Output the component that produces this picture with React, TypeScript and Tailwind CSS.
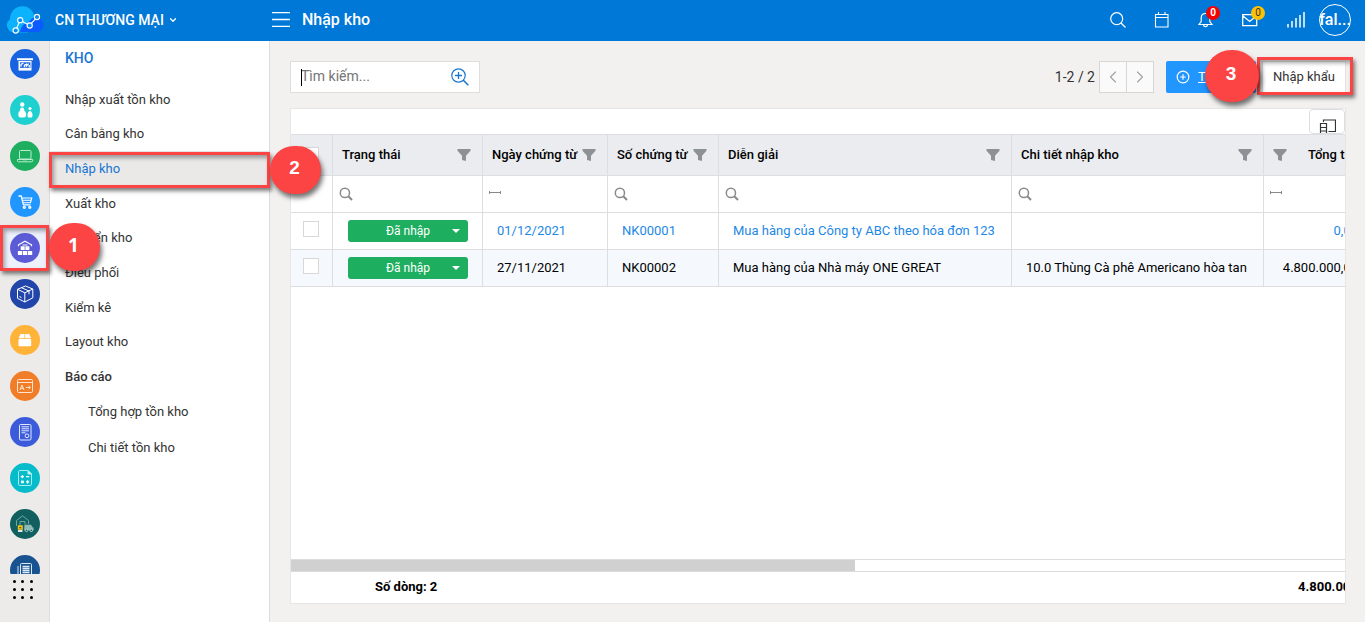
import React from "react";
import { ChevronDown, ChevronLeft, ChevronRight, CirclePlus } from "lucide-react";

type RailItem = { label: string; color: string; icon: React.ReactNode; active?: boolean };

const RAIL: RailItem[] = [
  {
    label: "Tổng quan",
    color: "bg-[#1763e0]",
    icon: (
      <>
        <path d="M7 9.2h16v2H7z" fill="#fff" />
        <path d="M8.5 12h13v9.6h-13z" fill="#fff" />
        <path d="M10 13.3h10.4v5.6H10z" fill="#1763e0" />
        <path d="M11 17.8v-2.400l2.400-1.200M14.400 18.200v-2l2-1v1.800l2.200-2.400M19.200 16v2.400" fill="none" stroke="#fff" strokeWidth="1.300" />
      </>
    ),
  },
  {
    label: "Khách hàng",
    color: "bg-[#1fd0d0]",
    icon: (
      <g fill="#fff">
        <circle cx="12.2" cy="9.5" r="2.2" />
        <path d="M12.2 12.4c1.7 0 2 1.200 2.100 3 1.400 1.100 2 2.600 1.800 4.600-.2 1.700-.8 2.500-2.400 2.500h-3c-1.600 0-2.200-.8-2.400-2.500-.2-2 .4-3.500 1.800-4.600.1-1.800.4-3 2.100-3z" />
        <circle cx="20" cy="13.6" r="1.6" />
        <path d="M20 15.9c1.200 0 2.400 1.600 2.500 4 .1 1.700-.5 2.600-1.500 2.600h-2c-1 0-1.600-.9-1.500-2.600.1-2.400 1.300-4 2.500-4z" />
      </g>
    ),
  },
  {
    label: "Bán hàng",
    color: "bg-[#1dae60]",
    icon: (
      <g fill="none" stroke="#b9ecce" strokeWidth="1">
        <rect x="9.500" y="9.500" width="11.500" height="8.500" rx="1" />
        <path d="M7.500 18.500h15.200v1.300c0 .6-.5 1-1 1H8.500c-.6 0-1-.4-1-1zM13 18.800h4" />
      </g>
    ),
  },
  {
    label: "Mua hàng",
    color: "bg-[#2196ff]",
    icon: (
      <g fill="none" stroke="#fff" strokeWidth="1.300">
        <path d="M8.500 9h2.700l2.300 8.800h7" />
        <path d="M12 11h9.800l-1.300 4.800h-7.200M12.500 13.300h8.500" strokeWidth="1.100" />
        <circle cx="14.300" cy="20.300" r="1" />
        <circle cx="19.800" cy="20.300" r="1" />
      </g>
    ),
  },
  {
    label: "Kho",
    color: "bg-[#5b5bd6]",
    active: true,
    icon: (
      <>
        <path d="M8.500 13.200v-1.400L15 8.300l6.500 3.500v1.400" fill="none" stroke="#fff" strokeWidth="1.200" />
        <g fill="#fff">
          <path d="M10.700 13.200h4v3.700h-4zM15.400 13.200h4v3.700h-4zM7.900 18h4.300v3.900H7.900zM12.900 18h4.300v3.900h-4.300zM17.900 18h4.300v3.900h-4.300z" />
          <path d="M12.500 11.500h5v1h-5z" />
        </g>
      </>
    ),
  },
  {
    label: "Sản phẩm",
    color: "bg-[#2145a8]",
    icon: (
      <g fill="none" stroke="#fff" strokeWidth="1" strokeLinejoin="round">
        <path d="M15.500 7l7.300 3v8.800L14.800 23 7.500 19.300V10.300z" />
        <path d="M7.500 10.300l7.300 3.500 8-3.800M14.800 13.800V23M11.500 8.700l7.500 3.300v3.300M9.500 17.500l2 1" />
      </g>
    ),
  },
  {
    label: "Giao hàng",
    color: "bg-[#ffb338]",
    icon: (
      <g fill="#fff">
        <path d="M10.500 9h4v4.300H8.600zM15.200 9h4l1.900 4.300h-5.900z" />
        <rect x="8.500" y="14" width="12.700" height="7.200" rx=".8" />
      </g>
    ),
  },
  {
    label: "Ngôn ngữ",
    color: "bg-[#f07d27]",
    icon: (
      <g fill="none" stroke="#ffe3cd" strokeWidth="1">
        <rect x="7.500" y="8.500" width="15" height="13" rx="1.200" />
        <path d="M7.500 11.500h15M10 19l2-5 2 5M10.800 17.300h2.600M16 16.500h4.300M18.700 14.900l1.700 1.600-1.700 1.600" />
      </g>
    ),
  },
  {
    label: "Hợp đồng",
    color: "bg-[#3b5bdb]",
    icon: (
      <g fill="none" stroke="#e3e9ff" strokeWidth="1">
        <rect x="9.500" y="7.500" width="11.500" height="15.500" rx="1.200" />
        <path d="M11.500 9.800h7.500M11.500 11.800h7.500M11.500 13.800h7.500M11.500 15.800h4" />
        <circle cx="17" cy="18.800" r="1.900" />
      </g>
    ),
  },
  {
    label: "Kế toán",
    color: "bg-[#06bccb]",
    icon: (
      <g fill="none" stroke="#a5eef2" strokeWidth="1">
        <path d="M18 7.500H9.700c-.7 0-1.200.5-1.200 1.200v12.600c0 .7.5 1.200 1.200 1.200h10.600c.7 0 1.200-.5 1.200-1.200V11z" />
        <path d="M18 7.500V11h3.500z" fill="#fff" />
        <path d="M10.800 13.700h3.200M12.400 12.100v3.200M16 13.700h3.200M11.300 17.700l2.300 2.300M13.600 17.700l-2.300 2.300M16 18.800h3.200M17.600 17.200v3.200" stroke="#fff" strokeWidth="1.300" />
      </g>
    ),
  },
  {
    label: "Tài sản",
    color: "bg-[#11605f]",
    icon: (
      <>
        <path d="M6.500 17v-5.500l6-4.700 6 4.700v3.500M10 16v-3.500h5v3" fill="none" stroke="#6fa5a2" strokeWidth="1" />
        <path d="M14.500 15.800h6.500l1.800 2.700h.8v2.800h-9.500z" fill="#8db9b6" />
        <circle cx="16.500" cy="21.300" r="1.300" fill="#11605f" stroke="#b9d6d4" />
        <circle cx="21.300" cy="21.300" r="1.300" fill="#11605f" stroke="#b9d6d4" />
        <rect x="7.800" y="16.300" width="5" height="4.500" rx=".6" fill="#f5c518" />
        <path d="M9.300 18h2v1.300h-2z" fill="#6b4e00" />
        <path d="M8 21h4.500v2H8z" fill="#d8e8e6" />
      </>
    ),
  },
  {
    label: "Tin tức",
    color: "bg-[#18528f]",
    icon: (
      <g fill="none" stroke="#dbe8f7" strokeWidth="1">
        <path d="M10.500 22V9.500c0-.6.4-1 1-1h9c.6 0 1 .4 1 1V22M8 11v11" />
        <path d="M12.500 11.500h7M12.500 13.500h7M12.500 15.500h7M12.500 17.500h7" strokeWidth="1.300" />
      </g>
    ),
  },
];

const MENU = ["Nhập xuất tồn kho", "Cân bằng kho", "Nhập kho", "Xuất kho", "Chuyển kho", "Điều phối", "Kiểm kê", "Layout kho"];
const REPORTS = ["Tổng hợp tồn kho", "Chi tiết tồn kho"];

const ROWS = [
  { date: "01/12/2021", code: "NK00001", note: "Mua hàng của Công ty ABC theo hóa đơn 123", detail: "", total: "0,00", link: true },
  { date: "27/11/2021", code: "NK00002", note: "Mua hàng của Nhà máy ONE GREAT", detail: "10.0 Thùng Cà phê Americano hòa tan", total: "4.800.000,00", link: false },
];

const COLUMNS = ["Trạng thái", "Ngày chứng từ", "Số chứng từ", "Diễn giải", "Chi tiết nhập kho"];
const FILTERS = [
  { name: "Trạng thái", range: false },
  { name: "Ngày chứng từ", range: true },
  { name: "Số chứng từ", range: false },
  { name: "Diễn giải", range: false },
  { name: "Chi tiết nhập kho", range: false },
  { name: "Tổng tiền", range: true },
];

function Logo() {
  return (
    <svg className="h-[30px] w-[38px]" viewBox="6 5 38 30" aria-hidden="true">
      <path d="M14 32.500a7.300 7.300 0 0 1-4-13.200C10 12 15 6.300 22.500 6.300c5.500 0 9.500 3 11.300 8.200 1.500 4 0 12-6 18z" fill="#0cb2fb" />
      <path d="M20 32c1-5.500 4-8.800 8.500-9.500 2-3.500 5-5.500 8.500-5 4 .8 6.500 3.800 6.500 7.500 0 4.300-3 7-7 7z" fill="#0b5cff" />
      <g stroke="#fff" strokeWidth="1.100">
        <path d="M16.600 28.200l2.600-5.700M22.300 21.500l5.200 2.800M31.300 23.300l4-4.200" />
        <g fill="#0a8cf0">
          <circle cx="15.700" cy="30.500" r="2.600" />
          <circle cx="20.200" cy="20.200" r="2.600" />
          <circle cx="29.700" cy="25.500" r="2.600" />
          <circle cx="37" cy="17" r="2.600" />
        </g>
      </g>
    </svg>
  );
}

function Funnel() {
  return (
    <svg className="h-3 w-[14px] shrink-0" viewBox="0 0 14 12" fill="#8d9095" aria-hidden="true">
      <path d="M.5 0h13v1.800L9 6.800V12L5 11V6.800L.5 1.800z" />
    </svg>
  );
}

function Lens() {
  return (
    <svg className="h-[14px] w-[14px] shrink-0" viewBox="0 0 14 14" fill="none" stroke="#8a8a8a" strokeWidth="1.500" aria-hidden="true">
      <circle cx="5.900" cy="5.900" r="4.600" />
      <path d="M9.300 9.300L13 13" strokeWidth="2" />
    </svg>
  );
}

function Range() {
  return (
    <svg className="h-[14px] w-[12px] shrink-0" viewBox="0 0 12 14" fill="none" stroke="#888" aria-hidden="true">
      <path d="M.5 4v3M11.500 4v3M1 5.500h10" />
    </svg>
  );
}

const BOX = "absolute border-3 border-[#fd4444] shadow-[2px_3px_4px_rgba(0,0,0,0.5),inset_2px_3px_4px_rgba(0,0,0,0.35)]";
const DOT = "absolute flex items-center justify-center rounded-full bg-[#fd4444] pb-[3px] text-[19px] font-bold text-white shadow-[2px_4px_5px_rgba(0,0,0,0.55)]";

function Callouts() {
  return (
    <div className="pointer-events-none absolute inset-0 z-10">
      <div className={`${BOX} left-0 top-[225px] h-[46px] w-[49px]`} />
      <div className={`${DOT} left-[49px] top-[223px] h-12 w-[51px] pr-[2px] font-['Open_Sans',sans-serif]`}>1</div>
      <div className={`${BOX} left-[49px] top-[152px] h-9 w-[221px]`} />
      <div className={`${DOT} left-[270px] top-[146px] h-12 w-[51px] pr-[2px] font-['Liberation_Sans',sans-serif]`}>2</div>
      <div className={`${BOX} right-3 top-[57px] h-[38px] w-24`} />
      <div className={`${DOT} right-[106px] top-[50px] h-[52px] w-[54px] pr-[2px] font-['Liberation_Sans',sans-serif]`}>3</div>
    </div>
  );
}

function Header() {
  return (
    <header className="flex h-[41px] shrink-0 items-center bg-[#0078d7] pb-[2px] text-white">
      <div className="flex w-[272px] items-center pl-[6px]">
        <Logo />
        <button type="button" className="ml-[11px] flex items-center gap-1 text-[14px] font-medium leading-5">
          CN THƯƠNG MẠI
          <ChevronDown size={10} strokeWidth={3} />
        </button>
      </div>
      <button type="button" aria-label="Mở menu">
        <svg className="h-[15px] w-[18px]" viewBox="0 0 18 15" stroke="#fff" strokeWidth="1.300" aria-hidden="true">
          <path d="M0 .7h18M0 7.500h18M0 14.300h18" />
        </svg>
      </button>
      <h1 className="ml-3 text-[16px] font-medium leading-5">Nhập kho</h1>
      <div className="ml-auto flex items-center gap-7 pr-[14px]">
        <button type="button" aria-label="Tìm kiếm">
          <svg className="h-4 w-4" viewBox="0 0 16 16" fill="none" stroke="#fff" strokeWidth="1.200">
            <circle cx="6.700" cy="6.700" r="6" />
            <path d="M11 11l4.500 4.500" />
          </svg>
        </button>
        <button type="button" aria-label="Lịch">
          <svg className="h-4 w-4" viewBox="0 0 16 16" fill="none" stroke="#fff" strokeWidth="1.100">
            <path d="M1.500 2.500h12.500v12.500h-12.500zM1.500 5.500h12.500M4.500 0v2.500M11 0v2.500" />
          </svg>
        </button>
        <button type="button" aria-label="Thông báo" className="relative">
          <svg className="h-4 w-4" viewBox="0 0 16 16" fill="none" stroke="#fff" strokeWidth="1.200">
            <path d="M7.500 1.500c-2.800 0-4.300 2-4.300 4.500v3.500L1 12.500h13L11.800 9.500V6c0-2.500-1.500-4.500-4.300-4.500zM5.500 12.500c0 2.800 4 2.800 4 0" />
          </svg>
          <span className="absolute -top-1.5 left-2 flex h-[14px] w-[14px] items-center justify-center rounded-full bg-[#f60000] text-[10px] font-bold leading-none">0</span>
        </button>
        <button type="button" aria-label="Tin nhắn" className="relative">
          <svg className="h-4 w-4" viewBox="0 0 16 16" fill="none" stroke="#fff" strokeWidth="1.300">
            <path d="M.7 2.700h14v11H.7zM1 4l6.700 5.500L14.400 4" />
          </svg>
          <span className="absolute -top-1.5 left-[9px] flex h-[14px] w-[14px] items-center justify-center rounded-full bg-[#ffc107] text-[10px] leading-none text-[#333]">0</span>
        </button>
        <div className="flex items-center gap-[14px] pl-px">
          <button type="button" aria-label="Tín hiệu">
            <svg className="h-4 w-[18px]" viewBox="0 0 18 16" fill="none" stroke="#fff" strokeWidth="1.500">
              <path d="M1 15.500v-3.500M5 15.500V9M9 15.500V6M13 15.500V3M17 15.500V0" />
            </svg>
          </button>
          <button type="button" className="flex h-8 w-8 items-center justify-center rounded-full border border-white text-[16px] font-medium leading-5">
            fal...
          </button>
        </div>
      </div>
    </header>
  );
}

function Rail() {
  return (
    <nav aria-label="Phân hệ" className="flex w-[50px] shrink-0 flex-col border-r border-[#dcdcdc] bg-[#ecebea]">
      <div className="mb-[6px] min-h-0 flex-1 overflow-hidden">
        {RAIL.map((item) => (
          <a key={item.label} href="#" aria-label={item.label} className={`flex h-[46px] items-center pl-[10px] ${item.active ? "bg-[#edf1fc]" : ""}`}>
            <span className={`block h-[30px] w-[30px] rounded-full ${item.color}`}>
              <svg viewBox="0 0 30 30" className="h-[30px] w-[30px]" aria-hidden="true">{item.icon}</svg>
            </span>
          </a>
        ))}
      </div>
      <button type="button" aria-label="Tất cả ứng dụng" className="mb-[23px] ml-[13px] grid w-5 grid-cols-3 gap-[5px]">
        {Array.from({ length: 9 }, (_, i) => (
          <span key={i} className="h-[3px] w-[3px] rounded-full bg-black" />
        ))}
      </button>
    </nav>
  );
}

function SideMenu() {
  return (
    <aside className="flex w-[220px] shrink-0 flex-col border-r border-[#dcdcdc] bg-white text-[13px] text-[#333]">
      <h2 className="mb-[6px] flex h-[35px] items-center pl-[15px] text-[14px] font-medium text-[#1976d2]">KHO</h2>
      <ul className="grid h-[312px] auto-rows-fr">
        {MENU.map((label) => (
          <li key={label}>
            <a href="#" className={`flex h-full items-center pl-[15px] ${label === "Nhập kho" ? "bg-[#eae9e8] text-[#1976d2]" : ""}`}>
              {label}
            </a>
          </li>
        ))}
        <li className="flex items-center pl-[15px] font-medium">Báo cáo</li>
      </ul>
      <ul>
        {REPORTS.map((label) => (
          <li key={label}>
            <a href="#" className="flex h-9 items-center pl-[38px]">{label}</a>
          </li>
        ))}
      </ul>
    </aside>
  );
}

function Toolbar() {
  return (
    <div className="flex h-8 shrink-0 items-center text-[#333]">
      <div className="relative flex h-8 w-[190px] items-center border border-[#dedede] bg-white pl-[10px] pr-[10px]">
        <input type="search" aria-label="Tìm kiếm" placeholder="Tìm kiếm..." className="w-full min-w-0 flex-1 bg-transparent pb-[2px] text-[14px] placeholder-[#757575] outline-none" />
        <span className="absolute left-[10px] top-[7px] h-[17px] w-px bg-black" />
        <button type="button" aria-label="Tìm kiếm nâng cao">
          <svg className="h-[18px] w-[18px]" viewBox="0 0 18 18" fill="none" stroke="#1976d2" strokeWidth="1.200">
            <circle cx="7.500" cy="7.500" r="6.700" />
            <path d="M7.500 4v7M4 7.500h7" strokeWidth="1.300" />
            <path d="M12.300 12.300l5 5" strokeWidth="1.600" />
          </svg>
        </button>
      </div>
      <span className="ml-auto text-[14px]">1-2 / 2</span>
      <div className="ml-1 flex h-8 border border-[#d6d6d6] bg-[#fafafa] text-[#a0a0a0]">
        <button type="button" aria-label="Trang trước" className="flex w-[27px] items-center justify-center border-r border-[#d6d6d6]">
          <ChevronLeft size={20} strokeWidth={1.300} />
        </button>
        <button type="button" aria-label="Trang sau" className="flex w-[26px] items-center justify-center">
          <ChevronRight size={20} strokeWidth={1.300} />
        </button>
      </div>
      <button type="button" className="ml-3 flex h-8 w-[90px] items-center gap-2 rounded-xs bg-[#2196ff] pl-[10px] text-[13px] text-white">
        <CirclePlus size={14} strokeWidth={2} />
        <span><u>T</u>hêm</span>
      </button>
      <button type="button" className="ml-[6px] h-8 w-[84px] border border-[#e2e2e2] bg-white text-[13px]">Nhập khẩu</button>
    </div>
  );
}

const CHECK = "block h-4 w-4 appearance-none border border-[#d8d8d8] bg-white";
const TH = "border-b border-r border-[#dcdee2] p-0 text-left font-medium";
const TD = "border-b border-r border-[#dcdee2] p-0";

function Grid() {
  return (
    <section className="mt-[15px] flex min-h-0 flex-1 flex-col border border-[#e6e6e6] bg-white text-[13px] text-black">
      <div className="flex h-[26px] shrink-0 justify-end border-b border-[#dcdee2]">
        <button type="button" aria-label="Chọn cột" className="flex w-9 items-start justify-center overflow-hidden rounded-sm border border-[#dcdee2] bg-white pt-[9px]">
          <svg className="h-[15px] w-[17px] shrink-0" viewBox="0 0 17 15" fill="none" stroke="#333" strokeWidth="1.200">
            <path d="M4.500 3V1h12v11.500H9.500M1.500 15V4.500h6V15M1.500 8.500h6M1.500 12h6" />
          </svg>
        </button>
      </div>
      <div className="min-h-0 flex-1 overflow-hidden">
        <table className="w-[1083px] table-fixed border-separate border-spacing-0 whitespace-nowrap">
          <colgroup>
            <col className="w-[42px]" />
            <col className="w-[150px]" />
            <col className="w-[125px]" />
            <col className="w-[111px]" />
            <col className="w-[293px]" />
            <col className="w-[252px]" />
            <col className="w-[110px]" />
          </colgroup>
          <thead>
            <tr className="h-[41px] bg-[#ebecf0]">
              <th className={TH}>
                <input type="checkbox" aria-label="Chọn tất cả" className={`${CHECK} ml-3`} />
              </th>
              {COLUMNS.map((name) => (
                <th key={name} className={TH}>
                  <div className="flex items-center justify-between pb-px pl-[9px] pr-[11px]">
                    {name}
                    <Funnel />
                  </div>
                </th>
              ))}
              <th className={TH}>
                <div className="flex items-center justify-between pb-px pl-[9px] pr-[11px]">
                  <Funnel />
                  Tổng tiền
                </div>
              </th>
            </tr>
            <tr className="h-[37px]">
              <td className={TD} />
              {FILTERS.map((f) => (
                <td key={f.name} className={TD}>
                  <label className="flex items-center gap-1 px-[6px]">
                    {f.range ? <Range /> : <Lens />}
                    <input type="text" aria-label={`Lọc ${f.name}`} className="h-6 w-full min-w-0 bg-transparent outline-none" />
                  </label>
                </td>
              ))}
            </tr>
          </thead>
          <tbody>
            {ROWS.map((r) => (
              <tr key={r.code} className={`h-[37px] ${r.link ? "text-[#1e88e5]" : "bg-[#f5f9fd]"}`}>
                <td className={TD}>
                  <input type="checkbox" aria-label={`Chọn ${r.code}`} className={`${CHECK} mb-1 ml-3`} />
                </td>
                <td className={TD}>
                  <div className="relative ml-[15px] w-[120px]">
                    <select aria-label={`Trạng thái ${r.code}`} className="block h-[22px] w-full appearance-none rounded-[3px] bg-[#1dae60] text-center text-[12px] text-white">
                      <option>Đã nhập</option>
                    </select>
                    <svg className="pointer-events-none absolute right-2 top-[9px] h-1 w-2" viewBox="0 0 8 4" fill="#fff" aria-hidden="true">
                      <path d="M0 0h8L4 4z" />
                    </svg>
                  </div>
                </td>
                <td className={`${TD} pl-[14px]`}>{r.date}</td>
                <td className={`${TD} pl-[14px]`}>{r.code}</td>
                <td className={`${TD} pl-[14px]`}>{r.note}</td>
                <td className={`${TD} pl-[14px]`}>{r.detail}</td>
                <td className={`${TD} pr-[15px] text-right`}>{r.total}</td>
              </tr>
            ))}
          </tbody>
        </table>
      </div>
      <div className="h-[13px] shrink-0 border-y border-[#dcdcdc]">
        <div className="h-full w-[53.5%] bg-[#d0d0d0]" />
      </div>
      <div className="flex h-[31px] shrink-0 items-center overflow-hidden whitespace-nowrap pb-[2px] font-bold">
        <span className="w-[1007px] shrink-0 pl-[84px]">Số dòng: 2</span>
        <span>4.800.000,00</span>
      </div>
    </section>
  );
}

export default function App() {
  return (
    <div className="relative flex h-screen flex-col overflow-hidden font-['Roboto','Noto_Sans',sans-serif]">
      <Header />
      <div className="flex min-h-0 flex-1">
        <Rail />
        <SideMenu />
        <main className="flex min-w-0 flex-1 flex-col bg-[#f2f1f0] pb-[18px] pl-5 pr-[19px] pt-5">
          <Toolbar />
          <Grid />
        </main>
      </div>
      <Callouts />
    </div>
  );
}
